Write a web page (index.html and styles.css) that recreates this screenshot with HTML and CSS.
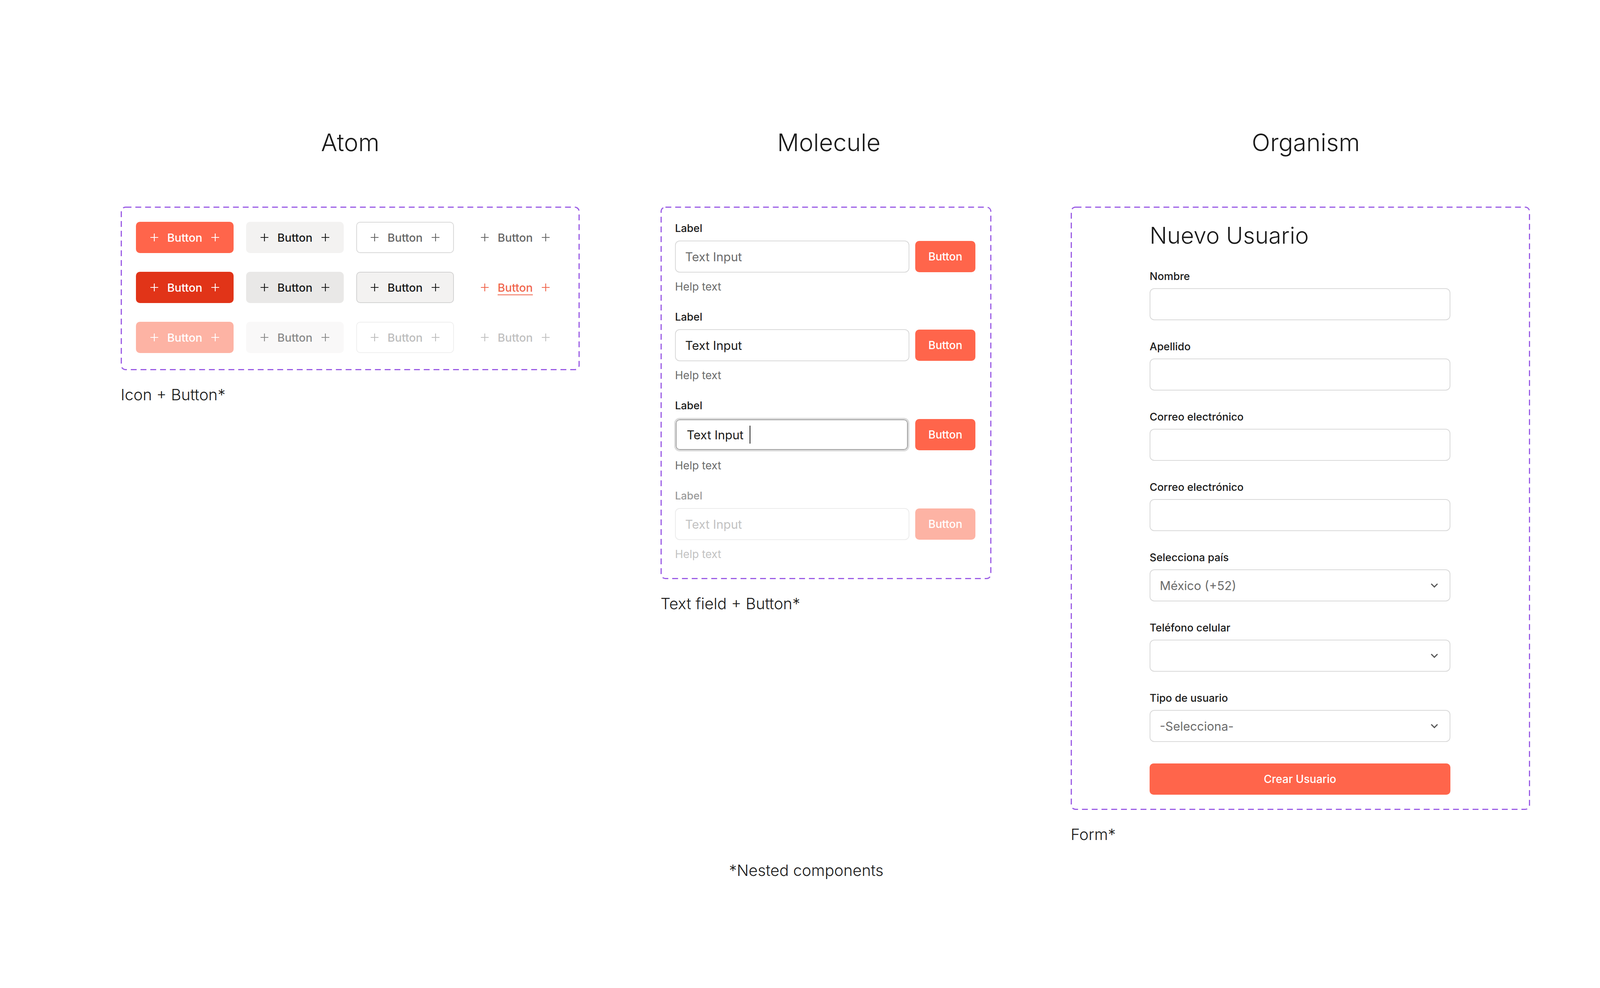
FILE: index.html
```html
<!DOCTYPE html>
<html lang="es">
  <head>
    <meta charset="UTF-8" />
    <meta name="viewport" content="width=device-width, initial-scale=1.0" />
    <title>Atomic design</title>
    <link rel="stylesheet" href="styles.css">
  </head>

  <body>
    <main class="board">
      <!-- Atom -->
      <section class="col col-atom">
        <h2 class="col-title">Atom</h2>
        <div class="frame atom-box">
          <svg class="frame-line"><rect /></svg>

          <div class="btn btn-primary"><svg viewBox="0 0 22 22"><path d="M11 1v20M1 11h20" /></svg><span>Button</span><svg viewBox="0 0 22 22"><path d="M11 1v20M1 11h20" /></svg></div>
          <div class="btn btn-soft"><svg viewBox="0 0 22 22"><path d="M11 1v20M1 11h20" /></svg><span>Button</span><svg viewBox="0 0 22 22"><path d="M11 1v20M1 11h20" /></svg></div>
          <div class="btn btn-outline"><svg viewBox="0 0 22 22"><path d="M11 1v20M1 11h20" /></svg><span>Button</span><svg viewBox="0 0 22 22"><path d="M11 1v20M1 11h20" /></svg></div>
          <div class="btn btn-ghost"><svg viewBox="0 0 22 22"><path d="M11 1v20M1 11h20" /></svg><span>Button</span><svg viewBox="0 0 22 22"><path d="M11 1v20M1 11h20" /></svg></div>

          <div class="btn btn-primary pressed"><svg viewBox="0 0 22 22"><path d="M11 1v20M1 11h20" /></svg><span>Button</span><svg viewBox="0 0 22 22"><path d="M11 1v20M1 11h20" /></svg></div>
          <div class="btn btn-soft pressed"><svg viewBox="0 0 22 22"><path d="M11 1v20M1 11h20" /></svg><span>Button</span><svg viewBox="0 0 22 22"><path d="M11 1v20M1 11h20" /></svg></div>
          <div class="btn btn-outline pressed"><svg viewBox="0 0 22 22"><path d="M11 1v20M1 11h20" /></svg><span>Button</span><svg viewBox="0 0 22 22"><path d="M11 1v20M1 11h20" /></svg></div>
          <div class="btn btn-ghost pressed"><svg viewBox="0 0 22 22"><path d="M11 1v20M1 11h20" /></svg><span>Button</span><svg viewBox="0 0 22 22"><path d="M11 1v20M1 11h20" /></svg></div>

          <div class="btn btn-primary disabled"><svg viewBox="0 0 22 22"><path d="M11 1v20M1 11h20" /></svg><span>Button</span><svg viewBox="0 0 22 22"><path d="M11 1v20M1 11h20" /></svg></div>
          <div class="btn btn-soft disabled"><svg viewBox="0 0 22 22"><path d="M11 1v20M1 11h20" /></svg><span>Button</span><svg viewBox="0 0 22 22"><path d="M11 1v20M1 11h20" /></svg></div>
          <div class="btn btn-outline disabled"><svg viewBox="0 0 22 22"><path d="M11 1v20M1 11h20" /></svg><span>Button</span><svg viewBox="0 0 22 22"><path d="M11 1v20M1 11h20" /></svg></div>
          <div class="btn btn-ghost disabled"><svg viewBox="0 0 22 22"><path d="M11 1v20M1 11h20" /></svg><span>Button</span><svg viewBox="0 0 22 22"><path d="M11 1v20M1 11h20" /></svg></div>
        </div>
        <p class="caption">Icon + Button*</p>
      </section>

      <!-- Molecule -->
      <section class="col col-molecule">
        <h2 class="col-title">Molecule</h2>
        <div class="frame mol-box">
          <svg class="frame-line"><rect /></svg>

          <div class="mol-group">
            <div class="mol-label">Label</div>
            <div class="mol-row">
              <div class="text-input">Text Input</div>
              <div class="mol-btn">Button</div>
            </div>
            <div class="help">Help text</div>
          </div>

          <div class="mol-group">
            <div class="mol-label">Label</div>
            <div class="mol-row">
              <div class="text-input filled">Text Input</div>
              <div class="mol-btn">Button</div>
            </div>
            <div class="help">Help text</div>
          </div>

          <div class="mol-group">
            <div class="mol-label">Label</div>
            <div class="mol-row">
              <div class="text-input focused">Text Input<span class="caret"></span></div>
              <div class="mol-btn">Button</div>
            </div>
            <div class="help">Help text</div>
          </div>

          <div class="mol-group disabled">
            <div class="mol-label">Label</div>
            <div class="mol-row">
              <div class="text-input">Text Input</div>
              <div class="mol-btn">Button</div>
            </div>
            <div class="help">Help text</div>
          </div>
        </div>
        <p class="caption">Text field + Button*</p>
      </section>

      <!-- Organism -->
      <section class="col col-organism">
        <h2 class="col-title">Organism</h2>
        <div class="frame org-box">
          <svg class="frame-line"><rect /></svg>

          <h3 class="org-title">Nuevo Usuario</h3>

          <div class="org-field">
            <div class="org-label">Nombre</div>
            <div class="org-input"></div>
          </div>
          <div class="org-field">
            <div class="org-label">Apellido</div>
            <div class="org-input"></div>
          </div>
          <div class="org-field">
            <div class="org-label">Correo electrónico</div>
            <div class="org-input"></div>
          </div>
          <div class="org-field">
            <div class="org-label">Correo electrónico</div>
            <div class="org-input"></div>
          </div>
          <div class="org-field">
            <div class="org-label">Selecciona país</div>
            <div class="org-input">
              <span>México (+52)</span>
              <svg class="chevron" viewBox="0 0 20 12"><polyline points="2,2 10,10 18,2" /></svg>
            </div>
          </div>
          <div class="org-field">
            <div class="org-label">Teléfono celular</div>
            <div class="org-input">
              <span></span>
              <svg class="chevron" viewBox="0 0 20 12"><polyline points="2,2 10,10 18,2" /></svg>
            </div>
          </div>
          <div class="org-field">
            <div class="org-label">Tipo de usuario</div>
            <div class="org-input">
              <span>-Selecciona-</span>
              <svg class="chevron" viewBox="0 0 20 12"><polyline points="2,2 10,10 18,2" /></svg>
            </div>
          </div>

          <div class="org-submit">Crear Usuario</div>
        </div>
        <p class="caption">Form*</p>
      </section>
    </main>

    <p class="footnote">*Nested components</p>
  </body>
</html>
```

FILE: styles.css
```css
body {
  margin: 0;
  background-color: #ffffff;
  color: #1a1a1a;
  font-family: Inter, 'Noto Sans', sans-serif;
}

.board {
  display: flex;
  align-items: flex-start;
  padding: 327px 0 0 309px;
}

.col-atom {
  width: 1175px;
}

.col-molecule {
  width: 847px;
  margin-left: 207px;
}

.col-organism {
  width: 1176px;
  margin-left: 203px;
}

.col-title {
  margin: 0 0 126px 0;
  font-size: 62px;
  font-weight: 300;
  line-height: 76px;
  text-align: center;
}

.col-molecule .col-title {
  padding-left: 15px;
}

.col-organism .col-title {
  padding-left: 28px;
}

.caption {
  margin: 38px 0 0 0;
  font-size: 40px;
  font-weight: 300;
  line-height: 50px;
}

.footnote {
  margin: 42px 0 0 0;
  padding-left: 32px;
  text-align: center;
  font-size: 40px;
  font-weight: 300;
  line-height: 50px;
}

/* dashed purple frame */
.frame {
  position: relative;
  box-sizing: border-box;
}

.frame-line {
  position: absolute;
  top: 0;
  left: 0;
  width: 100%;
  height: 100%;
  overflow: visible;
  pointer-events: none;
}

.frame-line rect {
  x: 1.5px;
  y: 1.5px;
  width: calc(100% - 3px);
  height: calc(100% - 3px);
  rx: 11px;
  ry: 11px;
  fill: none;
  stroke: #9b5de5;
  stroke-width: 3;
  stroke-dasharray: 15 10;
}

/* atom */
.atom-box {
  display: grid;
  grid-template-columns: repeat(4, 250px);
  gap: 48px 32px;
  padding: 39px 39px 44px 39px;
}

.btn {
  height: 80px;
  box-sizing: border-box;
  border: 2px solid transparent;
  border-radius: 10px;
  display: flex;
  align-items: center;
  justify-content: center;
  gap: 22px;
  font-size: 29px;
  font-weight: 500;
}

.btn svg {
  width: 22px;
  height: 22px;
  fill: none;
  stroke: currentColor;
  stroke-width: 2.2;
}

.btn-primary {
  background-color: #ff654b;
  color: #ffffff;
}

.btn-primary.pressed {
  background-color: #e13418;
}

.btn-primary.disabled {
  background-color: #fdb3a4;
}

.btn-soft {
  background-color: #f3f2f1;
  color: #1a1a1a;
}

.btn-soft.pressed {
  background-color: #e9e8e7;
}

.btn-soft.disabled {
  background-color: #f9f8f8;
  color: #8a8a8a;
}

.btn-outline {
  background-color: #ffffff;
  border-color: #d9d9d9;
  color: #666666;
}

.btn-outline.pressed {
  background-color: #f3f2f1;
  border-color: #d3d3d3;
  color: #1a1a1a;
}

.btn-outline.disabled {
  border-color: #efefef;
  color: #bdbdbd;
}

.btn-ghost {
  color: #666666;
}

.btn-ghost.pressed {
  color: #f0664d;
}

.btn-ghost.pressed span {
  text-decoration: underline;
  text-decoration-thickness: 2px;
  text-underline-offset: 7px;
}

.btn-ghost.disabled {
  color: #c0c0c0;
}

/* molecule */
.mol-box {
  padding: 39px 41px 47px 37px;
}

.mol-group + .mol-group {
  margin-top: 44px;
}

.mol-label {
  font-size: 27px;
  font-weight: 500;
  line-height: 34px;
  margin-bottom: 14px;
}

.mol-row {
  display: flex;
  align-items: center;
  gap: 15px;
}

.text-input {
  width: 600px;
  height: 82px;
  box-sizing: border-box;
  border: 2px solid #d9d9d9;
  border-radius: 12px;
  padding: 0 24px;
  display: flex;
  align-items: center;
  font-size: 31px;
  color: #6b6b6b;
}

.text-input.filled {
  color: #1a1a1a;
}

.text-input.focused {
  width: 602px;
  height: 86px;
  margin-left: -2px;
  border: 4px solid #dcdcdc;
  border-radius: 14px;
  box-shadow: inset 0 0 0 2px #9d9d9d;
  padding-left: 28px;
  color: #1a1a1a;
}

.caret {
  display: inline-block;
  width: 2px;
  height: 46px;
  margin-left: 16px;
  background-color: #1a1a1a;
}

.mol-btn {
  width: 154px;
  height: 80px;
  border-radius: 10px;
  background-color: #ff654b;
  color: #ffffff;
  display: flex;
  align-items: center;
  justify-content: center;
  font-size: 28px;
  font-weight: 500;
}

.help {
  margin-top: 19px;
  font-size: 28px;
  line-height: 34px;
  color: #6b6b6b;
}

.mol-group.disabled .mol-label {
  color: #9a9a9a;
}

.mol-group.disabled .text-input {
  border-color: #ececec;
  color: #c2c2c2;
}

.mol-group.disabled .mol-btn {
  background-color: #fdb3a4;
}

.mol-group.disabled .help {
  color: #c2c2c2;
}

/* organism */
.org-box {
  padding: 38px 204px 39px 202px;
}

.org-title {
  margin: 0 0 52px 0;
  font-size: 59px;
  font-weight: 300;
  line-height: 72px;
}

.org-field + .org-field {
  margin-top: 51px;
}

.org-label {
  font-size: 27px;
  font-weight: 500;
  line-height: 34px;
  margin-bottom: 13px;
}

.org-input {
  height: 82px;
  box-sizing: border-box;
  border: 2px solid #d9d9d9;
  border-radius: 12px;
  padding: 0 29px 0 24px;
  display: flex;
  align-items: center;
  justify-content: space-between;
  font-size: 31px;
  color: #6b6b6b;
}

.chevron {
  width: 20px;
  height: 12px;
  fill: none;
  stroke: #555555;
  stroke-width: 3;
}

.org-submit {
  margin-top: 55px;
  height: 80px;
  border-radius: 10px;
  background-color: #ff654b;
  color: #ffffff;
  display: flex;
  align-items: center;
  justify-content: center;
  font-size: 28px;
  font-weight: 500;
}
```
